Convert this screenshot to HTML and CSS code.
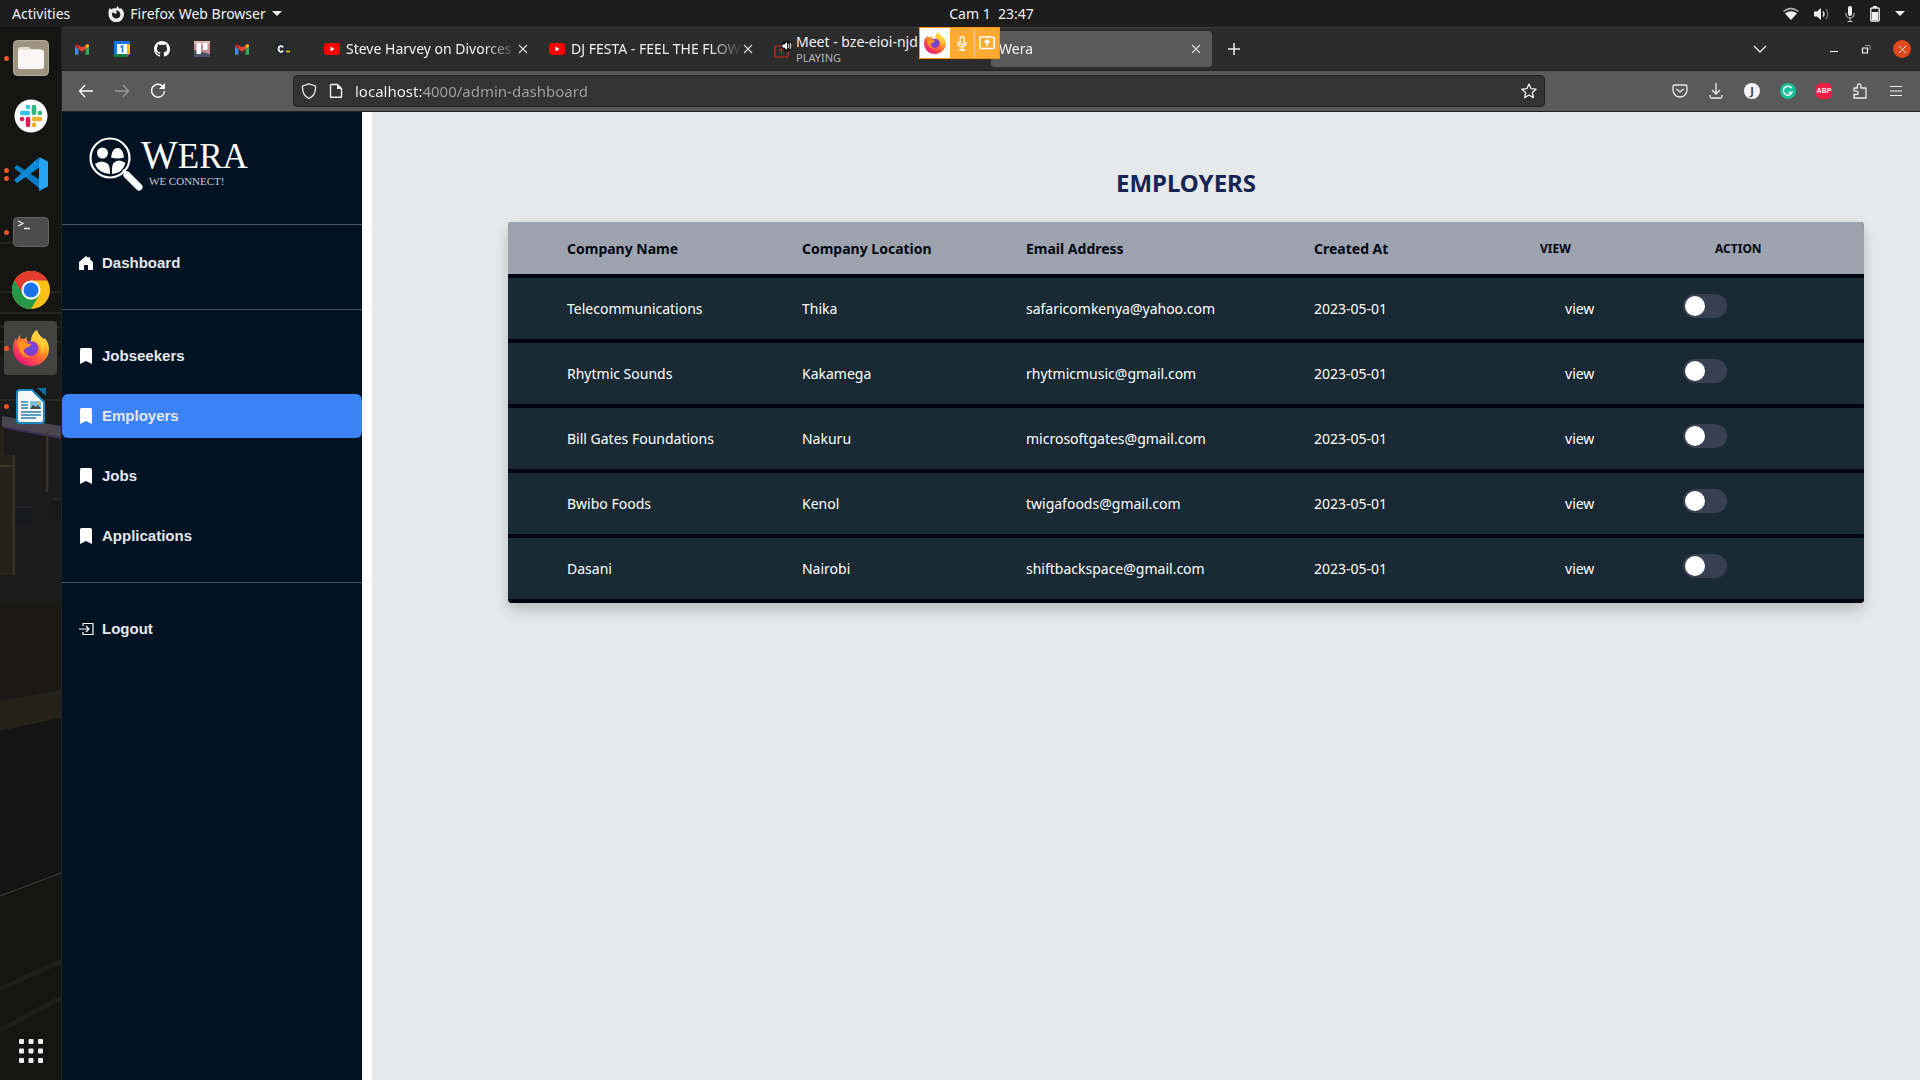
FILE: index.html
```html
<!DOCTYPE html>
<html lang="en">
<head>
<meta charset="utf-8">
<title>Wera</title>
<link rel="stylesheet" href="styles.css">
</head>
<body>
<svg width="0" height="0" class="defs" aria-hidden="true">
  <defs>
    <linearGradient id="foxBody" x1="0.85" y1="0.1" x2="0.2" y2="0.95"><stop offset="0" stop-color="#fff44f"/><stop offset=".35" stop-color="#ff9a1f"/><stop offset=".7" stop-color="#ff4a4a"/><stop offset="1" stop-color="#e01080"/></linearGradient>
    <radialGradient id="foxGlobe"><stop offset="0" stop-color="#5a55e0"/><stop offset="1" stop-color="#9535c8"/></radialGradient>
    <symbol id="firefox" viewBox="0 0 36 36">
      <path fill="url(#foxBody)" d="M18 36C8 36 0 28.500 0 18.500c0-4 1-7.500 3-10.500l.5 3L6.500 5l1 4c1.500-.5 3-.5 4 0l2-2 .5 4 4 1C18 7 20 2.500 24 0c.5 4 4 6 6.500 9l1-1c3 3 4.500 7 4.500 11C36 28.500 28 36 18 36z"/>
      <circle cx="18" cy="18.500" r="7.500" fill="url(#foxGlobe)"/>
      <path fill="#ff9420" d="M5 12c3-2 6-1 8 1l5 1c0 2-2 3-4 3.500-2 .5-2 2-3.500 2.500C11 24 14 26 18 27c-7 2-13-4-13-15z"/>
      <path fill="#ffd23a" opacity=".8" d="M24 0c.5 4 4 6 6 9 3 5 2 11-2 15 1-5 0-10-5-12-2-1-4-1-5 0C18 7 20 2.500 24 0z"/>
    </symbol>
    <symbol id="gmail" viewBox="0 0 16 12">
      <path fill="#4285f4" d="M1 12h3V5.500L0 2.500V11a1 1 0 0 0 1 1z"/><path fill="#34a853" d="M12 12h3a1 1 0 0 0 1-1V2.500l-4 3z"/>
      <path fill="#fbbc04" d="M12 0.800v4.700l4-3V1.500C16 0 14.500-.3 13.500.3z"/><path fill="#ea4335" d="M4 5.500V.8l4 3 4-3v4.700l-4 3z"/><path fill="#c5221f" d="M0 1.500v1l4 3V.8L2.500.3C1.300-.3 0 0 0 1.500z"/>
    </symbol>
    <symbol id="youtube" viewBox="0 0 16 12"><rect width="16" height="12" rx="3" fill="#f00"/><path fill="#fff" d="M6.500 3.500v5l4-2.500z"/></symbol>
    <symbol id="close" viewBox="0 0 10 10"><path d="M1 1l8 8M9 1L1 9" stroke="currentColor" stroke-width="1.100" fill="none"/></symbol>
    <symbol id="bookmark" viewBox="0 0 12 16"><path fill="#fff" d="M1.500 0h9A1.500 1.500 0 0 1 12 1.500V16l-6-3-6 3V1.500A1.500 1.500 0 0 1 1.500 0z"/></symbol>
    <symbol id="share" viewBox="0 0 16 14"><rect x=".8" y="1" width="14.400" height="11.500" rx="1.500" fill="none" stroke="currentColor" stroke-width="1.500"/><path d="M8 10V4.500M5.500 6.500L8 4l2.500 2.500" fill="none" stroke="currentColor" stroke-width="1.800"/></symbol>
  </defs>
</svg>

<header class="topbar">
  <div class="topbar-left">
    <button class="plain">Activities</button>
    <button class="plain app-menu">
      <svg width="16" height="16" viewBox="0 0 16 16"><path fill="#eee" fill-rule="evenodd" d="M1 3l1-1 1 1.500C5 2 7 2 8 2.500L9.500 0c1 1 1 2 2.500 3l1-1c2 2 3 4 3 6.500A7.500 7.500 0 0 1 .5 8.500C.5 6.500.5 5 1 3zM5 6C3 8 4 12 8 12.500s5.500-4 3.500-6.500C11 5 9 4 8 5l1 1.500L7 8z"/></svg>
      <span>Firefox Web Browser</span>
      <svg width="10" height="5" viewBox="0 0 10 5"><path fill="#eee" d="M0 0h10L5 5z"/></svg>
    </button>
  </div>
  <button class="plain clock">Cam 1&nbsp; 23:47</button>
  <div class="topbar-right">
    <svg width="16" height="14" viewBox="0 0 16 14"><path fill="#aaa" d="M0 4C5-.5 11-.5 16 4l-1 1.200C10 1.500 6 1.500 1 5.200z"/><path fill="#eee" d="M2 6.500C6 3.500 10 3.500 14 6.500L8 13z"/></svg>
    <svg width="16" height="14" viewBox="0 0 16 14"><path fill="#eee" d="M0 4.500h3L7 1v12L3 9.500H0z"/><path d="M9 4.500q2 2.500 0 5" stroke="#ddd" stroke-width="1.500" fill="none"/><path d="M12 2q3.500 5 0 10" stroke="#777" stroke-width="1.300" fill="none"/></svg>
    <svg width="10" height="16" viewBox="0 0 10 16"><rect x="3" width="4" height="10" rx="2" fill="#eee"/><path d="M1 7v1.500c0 4.500 8 4.500 8 0V7M5 12v4M2.500 15.500h5" stroke="#ccc" fill="none"/></svg>
    <svg width="10" height="16" viewBox="0 0 10 16"><path fill="#eee" d="M3 0h4v2H3z"/><rect x=".8" y="2" width="8.400" height="13" rx="1" fill="none" stroke="#eee" stroke-width="1.400"/><path fill="#eee" d="M2 6h6v8H2z"/></svg>
    <svg width="10" height="5" viewBox="0 0 10 5"><path fill="#eee" d="M0 0h10L5 5z"/></svg>
  </div>
</header>

<div class="desktop">
  <nav class="dock" aria-label="Dock">
    <svg class="wallpaper" viewBox="0 0 62 1053" preserveAspectRatio="none" aria-hidden="true">
      <rect width="62" height="1053" fill="#151614"/>
      <rect y="330" width="62" height="270" fill="#1b1b1c"/>
      <path d="M0 216h14M0 265h62M0 286h62M0 300h62M0 315h62M0 373h62" stroke="#39362a" fill="none"/>
      <path d="M2 389l60 10v12L2 400z" fill="#4a464f"/><path d="M2 400l60 11" stroke="#3b3155" stroke-width="2"/>
      <path d="M0 400h4v28h10v120H0z" fill="#25221a"/><path d="M14 428v120M0 439h12M48 405v60" stroke="#3f3828" stroke-width="2"/>
      <path d="M16 480h16v18H16zM54 474h8v22h-8z" fill="#17191c"/><path d="M15 480h17M55 472h7" stroke="#333"/>
      <path d="M0 575h62v115L0 704z" fill="#1a1916"/>
      <path d="M0 674l62-11v28L0 704z" fill="#26221a"/><path d="M0 704l62-13v156L0 869z" fill="#141414"/>
      <path d="M0 869l62-23" stroke="#454540"/><path d="M0 962l62-28M0 1003l62-32" stroke="#1e1e1b" stroke-width="5"/>
    </svg>
    <a class="dock-item" href="#" aria-label="Files"><i class="dots"><b></b></i>
      <svg width="36" height="36" viewBox="0 0 36 36"><rect x=".5" y=".5" width="35" height="35" rx="4" fill="#9c947f" stroke="#b3ac99"/><path fill="#e4dfd3" d="M5 10a3 3 0 0 1 3-3h8l2 2h10v6H5z"/><rect x="5" y="10" width="26" height="19" rx="2" fill="#f8f7f5"/></svg></a>
    <a class="dock-item" href="#" aria-label="Slack"><i class="dots"></i>
      <svg width="34" height="34" viewBox="0 0 34 34"><circle cx="17" cy="17" r="16.500" fill="#fff"/><g stroke-width="4.600" stroke-linecap="round"><path d="M8 14h6M14 8v.1" stroke="#36c5f0"/><path d="M20 8v6M26 14h-.1" stroke="#2eb67d"/><path d="M20 20h6M20 26v-.1" stroke="#ecb22e"/><path d="M14 20v6M8 20h.1" stroke="#e01e5a"/></g></svg></a>
    <a class="dock-item" href="#" aria-label="Visual Studio Code"><i class="dots"><b></b><b></b></i>
      <svg width="34" height="34" viewBox="0 0 34 34"><path fill="#0a7cc4" d="M3 8L0 11l25 20 1-8z"/><path fill="#0e8ad8" d="M0 23l3 3L26 10 24 1z"/><path fill="#25a4f2" d="M25 0l8 4a2 2 0 0 1 1 2v22a2 2 0 0 1-1 2l-8 4z"/></svg></a>
    <a class="dock-item" href="#" aria-label="Terminal"><i class="dots"><b></b></i>
      <svg width="36" height="30" viewBox="0 0 36 30"><rect x=".5" y=".5" width="35" height="29" rx="4" fill="#4c4c4c" stroke="#666"/><path d="M5 4l5 2.500L5 9M11 11.500h6" stroke="#eee" stroke-width="1.300" fill="none"/></svg></a>
    <a class="dock-item" href="#" aria-label="Chrome"><i class="dots"></i>
      <svg width="38" height="38" viewBox="0 0 38 38"><circle cx="19" cy="19" r="19" fill="#fbc116"/><path fill="#e33b2e" d="M2.500 9.500A19 19 0 0 1 35.500 9.500H19L10 24z"/><path fill="#279847" d="M2.500 9.500A19 19 0 0 0 19 38l8.500-14.500L11 23z"/><circle cx="19" cy="19" r="9.500" fill="#fff"/><circle cx="19" cy="19" r="7.500" fill="#1a73e8"/></svg></a>
    <a class="dock-item current" href="#" aria-label="Firefox"><i class="dots"><b></b></i>
      <svg width="36" height="36"><use href="#firefox"/></svg></a>
    <a class="dock-item" href="#" aria-label="Writer"><i class="dots"><b></b></i>
      <svg width="30" height="36" viewBox="0 0 30 36"><path fill="#106a9c" d="M21 0h9v8z"/><path fill="#f7f7f7" stroke="#1d8abf" stroke-width="2" d="M4 2h12l12 12v18a3 3 0 0 1-3 3H4a3 3 0 0 1-3-3V5a3 3 0 0 1 3-3z"/><path d="M5 14h7M5 17h7M5 20h7M5 24h20M5 27h20M5 30h15" stroke="#2a7fb0" stroke-width="1.500"/><path fill="#7cc0e8" d="M14 13h11v8H14z"/><path fill="#444" d="M14 21l3-4 3 2 2-2 3 4z"/><circle cx="23" cy="15" r="1.500" fill="#f5b100"/></svg></a>
    <a class="apps" href="#" aria-label="Show Applications">
      <svg width="24" height="24" viewBox="0 0 24 24" fill="#eee"><g id="r"><rect width="5" height="5" rx="1"/><rect x="9.500" width="5" height="5" rx="1"/><rect x="19" width="5" height="5" rx="1"/></g><use href="#r" y="9.500"/><use href="#r" y="19"/></svg></a>
  </nav>

  <div class="window">
    <div class="tabbar">
      <div class="pins">
        <svg width="14" height="11"><use href="#gmail"/></svg>
        <svg width="16" height="16" viewBox="0 0 16 16"><path fill="#1a73e8" d="M0 0h16v16H0z"/><path fill="#fbbc04" d="M13 3h3v10h-3z"/><path fill="#188038" d="M0 13h13v3H0z"/><path fill="#ea4335" d="M13 13h3l-3 3z"/><path fill="#2c2c2c" d="M16 13v3h-3z"/><path fill="#fff" d="M3 3h10v10H3z"/><path d="M6.500 6l2-1v6.500" stroke="#1a73e8" stroke-width="1.500" fill="none"/></svg>
        <svg width="16" height="16" viewBox="0 0 16 16"><path fill="#fff" d="M8 0C3.580 0 0 3.580 0 8c0 3.540 2.290 6.530 5.470 7.590.4.070.55-.17.55-.38 0-.19-.01-.82-.01-1.490-2.010.37-2.530-.49-2.690-.94-.09-.23-.48-.94-.82-1.130-.28-.15-.68-.52-.01-.53.63-.01 1.080.58 1.230.82.72 1.210 1.870.87 2.330.66.070-.52.28-.87.51-1.070-1.780-.2-3.640-.89-3.640-3.950 0-.87.31-1.590.82-2.150-.08-.2-.36-1.020.08-2.120 0 0 .67-.21 2.200.82.64-.18 1.320-.27 2-.27s1.360.09 2 .27c1.530-1.040 2.200-.82 2.200-.82.44 1.100.16 1.920.08 2.120.51.56.82 1.270.82 2.150 0 3.070-1.870 3.750-3.650 3.950.29.25.54.73.54 1.480 0 1.070-.01 1.930-.01 2.200 0 .21.15.46.55.38A8 8 0 0 0 16 8c0-4.420-3.580-8-8-8z"/></svg>
        <svg width="16" height="16" viewBox="0 0 16 16"><path fill="#c98c95" d="M0 0h16v16H0z"/><path fill="#4d5668" d="M0 9l16 4v3H0z"/><path fill="#e3b5b0" d="M0 0h16v3H0z"/><rect x="2.500" y="2" width="4.500" height="11" rx="1" fill="#fff"/><rect x="9" y="2" width="4.500" height="7" rx="1" fill="#fff"/></svg>
        <svg width="14" height="11"><use href="#gmail"/></svg>
        <svg width="16" height="16" viewBox="0 0 16 16"><circle cx="8" cy="8" r="8" fill="#23292f"/><path d="M9 6.500C8 4 4.500 5 4.500 8S8 12 9 9.500" stroke="#fff" stroke-width="1.800" fill="none"/><path d="M12 10.500h4" stroke="#ffd500" stroke-width="1.600"/></svg>
      </div>
      <div class="tabs">
        <div class="tab"><svg width="16" height="12"><use href="#youtube"/></svg><span class="tab-title">Steve Harvey on Divorces</span><button class="tab-close" aria-label="Close tab"><svg width="10" height="10"><use href="#close"/></svg></button></div>
        <div class="tab"><svg width="16" height="12"><use href="#youtube"/></svg><span class="tab-title">DJ FESTA - FEEL THE FLOW</span><button class="tab-close" aria-label="Close tab"><svg width="10" height="10"><use href="#close"/></svg></button></div>
        <div class="tab meet">
          <svg width="18" height="18" viewBox="0 0 18 18"><rect x="1" y="6" width="13" height="11" rx="1" fill="none" stroke="#d9261c" stroke-width="1.200"/><path d="M7.500 14V9M5 11l2.500-2.500L10 11" stroke="#d9261c" fill="none"/><circle cx="13" cy="6" r="5.500" fill="#111"/><path fill="#fff" d="M8.500 4.500h2L13 2v8l-2.500-2.500h-2z"/><path d="M14 4q2 2 0 4M16 3q2 3 0 6" stroke="#fff" fill="none"/></svg>
          <div class="meet-text"><span>Meet - bze-eioi-njd</span><small>PLAYING</small></div>
          <div class="sharing">
            <div class="sharing-logo"><svg width="22" height="22"><use href="#firefox"/></svg></div>
            <button class="sharing-btn" aria-label="Microphone in use"><svg width="10" height="15" viewBox="0 0 10 15"><rect x="3" y=".7" width="4" height="8" rx="2" fill="none" stroke="currentColor" stroke-width="1.300"/><path d="M1 6v1c0 5 8 5 8 0V6M5 11v3M2 14h6" stroke="currentColor" stroke-width="1.300" fill="none"/></svg></button>
            <button class="sharing-btn screen" aria-label="Screen shared"><svg width="16" height="14"><use href="#share"/></svg></button>
          </div>
        </div>
        <div class="tab active"><span class="tab-title">Wera</span><button class="tab-close" aria-label="Close tab"><svg width="10" height="10"><use href="#close"/></svg></button></div>
      </div>
      <button class="plain new-tab" aria-label="New tab"><svg width="14" height="14" viewBox="0 0 14 14"><path d="M7 1v12M1 7h12" stroke="#eee" stroke-width="1.500"/></svg></button>
      <div class="window-controls">
        <button class="plain list" aria-label="List tabs"><svg width="14" height="8" viewBox="0 0 14 8"><path d="M1 1l6 6 6-6" stroke="#eee" stroke-width="1.300" fill="none"/></svg></button>
        <button class="plain" aria-label="Minimize"><svg width="10" height="10" viewBox="0 0 10 10"><path d="M1 7.500h8" stroke="#fff"/></svg></button>
        <button class="plain" aria-label="Restore"><svg width="10" height="10" viewBox="0 0 10 10"><path d="M1.500 4h5v5h-5z" stroke="#fff" stroke-width="1.200" fill="none"/><path d="M4 1.500h5V6" stroke="#999" fill="none"/></svg></button>
        <button class="plain close-window" aria-label="Close"><svg width="9" height="9"><use href="#close"/></svg></button>
      </div>
    </div>

    <div class="toolbar">
      <div class="nav-buttons">
        <button class="plain" aria-label="Back"><svg width="16" height="14" viewBox="0 0 16 14"><path d="M15 7H1.500M7 1L1.500 7 7 13" stroke="#fff" stroke-width="1.300" fill="none"/></svg></button>
        <button class="plain" aria-label="Forward"><svg width="16" height="14" viewBox="0 0 16 14"><path d="M1 7h13.500M9 1l5.500 6L9 13" stroke="#999" stroke-width="1.300" fill="none"/></svg></button>
        <button class="plain" aria-label="Reload"><svg width="16" height="16" viewBox="0 0 16 16"><path d="M12.500 3A6.500 6.500 0 1 0 14.500 8" stroke="#fff" stroke-width="1.400" fill="none"/><path fill="#fff" d="M15 0v6H9z"/></svg></button>
      </div>
      <div class="urlbar">
        <svg width="16" height="16" viewBox="0 0 16 16"><path d="M8 .8L14.500 3c.3 6-1 10-6.500 12.300C2.500 13 1.200 9 1.500 3z" stroke="#eee" stroke-width="1.300" fill="none" stroke-linejoin="round"/></svg>
        <svg width="14" height="16" viewBox="0 0 14 16"><path d="M2 1.500h6.500L12.500 5.500V14.300H1.500V2z" stroke="#eee" stroke-width="1.400" fill="none" stroke-linejoin="round"/><path fill="#eee" d="M8 1v5h5z"/></svg>
        <input class="url" type="text" aria-label="Address" value="localhost:4000/admin-dashboard">
        <svg width="16" height="16" viewBox="0 0 16 16"><path d="M8 1l2.100 4.700 5 .5-3.800 3.400 1.100 5L8 12l-4.400 2.600 1.100-5L.9 6.200l5-.5z" stroke="#eee" stroke-width="1.300" fill="none" stroke-linejoin="round"/></svg>
      </div>
      <div class="extensions">
        <button class="plain" aria-label="Pocket"><svg width="16" height="14" viewBox="0 0 16 14"><path d="M2.500 1h11A1.500 1.500 0 0 1 15 2.500V6a7 7 0 0 1-14 0V2.500A1.500 1.500 0 0 1 2.500 1zM4.500 5L8 8l3.500-3" stroke="#eee" stroke-width="1.300" fill="none"/></svg></button>
        <button class="plain" aria-label="Downloads"><svg width="14" height="16" viewBox="0 0 14 16"><path d="M7 0v11M3 7l4 4 4-4M1 12v1.500A1.500 1.500 0 0 0 2.500 15h9a1.500 1.500 0 0 0 1.500-1.500V12" stroke="#eee" stroke-width="1.300" fill="none"/></svg></button>
        <button class="plain badge account">J</button>
        <button class="plain" aria-label="Grammarly"><svg width="16" height="16" viewBox="0 0 16 16"><circle cx="8" cy="8" r="8" fill="#15c39a"/><path d="M11.500 5A4.500 4.500 0 1 0 12 9.500H8.500" stroke="#fff" stroke-width="1.400" fill="none"/></svg></button>
        <button class="plain badge abp">ABP</button>
        <button class="plain" aria-label="Extensions"><svg width="16" height="16" viewBox="0 0 16 16"><path d="M2 5h3.500V2.500a1.700 1.700 0 0 1 3.400 0V5H14v10H2v-3.500h2.500a1.700 1.700 0 0 0 0-3.400H2z" stroke="#eee" stroke-width="1.300" fill="none" stroke-linejoin="round"/></svg></button>
        <button class="plain" aria-label="Menu"><svg width="12" height="12" viewBox="0 0 12 12"><path d="M0 1.500h12M0 6h12M0 10.500h12" stroke="#eee" stroke-width="1.200"/></svg></button>
      </div>
    </div>

    <div class="page">
      <aside class="sidebar">
        <a class="brand" href="#">
          <svg width="54" height="54" viewBox="0 0 54 54"><circle cx="21" cy="21" r="19.500" fill="none" stroke="#fff" stroke-width="2.200"/><path d="M38 38l12 12" stroke="#fff" stroke-width="7" stroke-linecap="round"/><path d="M34 33l5 5" stroke="#fff" stroke-width="3"/><g fill="#fff"><circle cx="13.500" cy="16" r="5.500"/><path d="M6 27q7-5 13 0 2 2 2 10Q9 36 6 27zM36.500 26q-7-5-12 0-2 3-1.500 11 11-1 13.500-11zM22 20.500q1-9.500 6.500-9.500T35 20.500q-6 2-13 0z"/></g></svg>
          <span class="brand-text"><span class="brand-name"><span class="brand-cap">W</span>ERA</span><span class="brand-tag">WE CONNECT!</span></span>
        </a>
        <nav class="menu">
          <div class="menu-group first"><a class="menu-item" href="#"><svg width="16" height="16" viewBox="0 0 16 16"><path fill="#fff" d="M8 1l2.500 2V2H12v2.200L15 7v8h-5v-5H6v5H1V7z"/></svg>Dashboard</a></div>
          <div class="menu-group">
            <a class="menu-item" href="#"><svg width="16" height="16"><use href="#bookmark"/></svg>Jobseekers</a>
            <a class="menu-item selected" href="#" aria-current="page"><svg width="16" height="16"><use href="#bookmark"/></svg>Employers</a>
            <a class="menu-item" href="#"><svg width="16" height="16"><use href="#bookmark"/></svg>Jobs</a>
            <a class="menu-item" href="#"><svg width="16" height="16"><use href="#bookmark"/></svg>Applications</a>
          </div>
          <div class="menu-group"><a class="menu-item" href="#"><svg width="16" height="16" viewBox="0 0 16 16"><path d="M5 5V2.500h10v11H5V11M1 8h9M8 5l3 3-3 3" stroke="#fff" stroke-width="1.200" fill="none" stroke-linejoin="round"/></svg>Logout</a></div>
        </nav>
      </aside>
      <main class="content">
        <h1>EMPLOYERS</h1>
        <table class="employers">
          <colgroup><col class="c-name"><col class="c-location"><col class="c-email"><col class="c-date"><col class="c-view"><col class="c-action"></colgroup>
          <thead><tr><th>Company Name</th><th>Company Location</th><th>Email Address</th><th>Created At</th><th class="minor">VIEW</th><th class="minor action">ACTION</th></tr></thead>
          <tbody>
            <tr><td>Telecommunications</td><td>Thika</td><td>safaricomkenya@yahoo.com</td><td>2023-05-01</td><td class="view"><a href="#">view</a></td><td class="switch"><input class="toggle" type="checkbox" aria-label="Telecommunications"></td></tr>
            <tr><td>Rhytmic Sounds</td><td>Kakamega</td><td>rhytmicmusic@gmail.com</td><td>2023-05-01</td><td class="view"><a href="#">view</a></td><td class="switch"><input class="toggle" type="checkbox" aria-label="Rhytmic Sounds"></td></tr>
            <tr><td>Bill Gates Foundations</td><td>Nakuru</td><td>microsoftgates@gmail.com</td><td>2023-05-01</td><td class="view"><a href="#">view</a></td><td class="switch"><input class="toggle" type="checkbox" aria-label="Bill Gates Foundations"></td></tr>
            <tr><td>Bwibo Foods</td><td>Kenol</td><td>twigafoods@gmail.com</td><td>2023-05-01</td><td class="view"><a href="#">view</a></td><td class="switch"><input class="toggle" type="checkbox" aria-label="Bwibo Foods"></td></tr>
            <tr><td>Dasani</td><td>Nairobi</td><td>shiftbackspace@gmail.com</td><td>2023-05-01</td><td class="view"><a href="#">view</a></td><td class="switch"><input class="toggle" type="checkbox" aria-label="Dasani"></td></tr>
          </tbody>
        </table>
      </main>
    </div>
  </div>
</div>
</body>
</html>
```

FILE: styles.css
```css
* { box-sizing: border-box; }
body {
  margin: 0;
  min-height: 100vh;
  display: flex;
  flex-direction: column;
  font-family: "Noto Sans", "Open Sans", sans-serif;
  font-size: 14px;
  line-height: 20px;
  color: #f2f2f2;
  background: #1d1d1d;
}
svg { display: block; flex: none; }
a { color: inherit; text-decoration: none; }
.defs { position: absolute; }
.plain, .tab-close, .sharing-btn {
  border: 0;
  padding: 0;
  background: none;
  font: inherit;
  color: inherit;
  display: flex;
  align-items: center;
  justify-content: center;
}

/* Desktop top bar */
.topbar {
  height: 27px;
  padding: 0 15px 0 12px;
  display: grid;
  grid-template-columns: 1fr auto 1fr;
  align-items: center;
}
.topbar-left { display: flex; gap: 38px; }
.app-menu { gap: 6px; }
.clock { padding-left: 66px; }
.topbar-right { display: flex; align-items: center; justify-content: flex-end; gap: 15px; }

/* Dock */
.desktop { flex: 1; display: flex; }
.dock {
  position: relative;
  width: 62px;
  flex: none;
  display: flex;
  flex-direction: column;
  gap: 4px;
  padding: 4px 4px 17px;
  border-right: 1px solid #222;
}
.wallpaper { position: absolute; inset: 0; width: 100%; height: 100%; }
.dock-item {
  position: relative;
  height: 54px;
  border-radius: 4px;
  display: flex;
  align-items: center;
  justify-content: center;
}
.dock-item.current { background: #434341; }
.dots {
  position: absolute;
  left: 0;
  display: flex;
  flex-direction: column;
  gap: 3px;
}
.dots b { width: 5px; height: 5px; border-radius: 50%; background: #e95420; }
.apps { position: relative; margin-top: auto; display: flex; justify-content: center; }

/* Browser chrome */
.window { flex: 1; min-width: 0; display: flex; flex-direction: column; }
.tabbar {
  height: 44px;
  display: flex;
  align-items: center;
  background: #2c2c2c;
  border-top: 1px solid #3d3d3d;
  border-bottom: 1px solid #1c1c1c;
}
.pins { display: grid; grid-template-columns: repeat(6, 40px); justify-items: center; align-items: center; margin-right: 12px; }
.tabs { display: flex; align-self: stretch; }
.tab {
  position: relative;
  width: 225px;
  display: flex;
  align-items: center;
  gap: 6px;
  padding: 0 10px;
}
.tab-title {
  flex: 1;
  min-width: 0;
  overflow: hidden;
  white-space: nowrap;
  mask-image: linear-gradient(to left, transparent, #000 32px);
}
.tab-close { width: 12px; height: 16px; margin-left: -6px; color: #ddd; }
.tab.meet { gap: 4px; }
.meet-text { display: flex; flex-direction: column; white-space: nowrap; line-height: 18px; }
.meet-text small { font-size: 11px; line-height: 14px; color: #b5b5b5; }
.tab.active {
  width: 221px;
  height: 36px;
  margin: 3px 2px 0;
  padding: 0 10px 0 8px;
  border-radius: 4px;
  background: #5a5a5a;
}
.sharing {
  position: absolute;
  z-index: 1;
  left: 155px;
  top: -1px;
  height: 32px;
  width: 81px;
  display: flex;
  border: 1px solid #ff9500;
  background: #ffaa33;
}
.sharing-logo { width: 30px; display: flex; align-items: center; justify-content: center; background: #fff; }
.sharing-btn { flex: 1; color: #fff; }
.sharing-btn.screen { border-left: 1px solid #ffd08a; }
.new-tab { width: 40px; height: 36px; }
.window-controls { margin-left: auto; display: flex; align-items: center; gap: 22px; padding-right: 9px; }
.list { margin-right: 40px; }
.close-window { width: 18px; height: 18px; border-radius: 50%; background: #e2491a; }
.toolbar {
  height: 41px;
  display: flex;
  align-items: center;
  background: #5a5a5a;
  border-bottom: 1px solid #222;
}
.nav-buttons { width: 231px; display: flex; gap: 20px; padding-left: 16px; }
.urlbar {
  flex: 1;
  height: 32px;
  display: flex;
  align-items: center;
  gap: 12px;
  padding: 0 7px;
  border: 1px solid #222;
  border-radius: 4px;
  background: #333;
}
.url {
  flex: 1;
  min-width: 0;
  border: 0;
  padding: 0;
  font: 15px/20px "Noto Sans", "Open Sans", sans-serif;
  color: transparent;
  background: linear-gradient(to right, #f8f8f8 67px, #a3a3a3 67px);
  background-clip: text;
}
.extensions { width: 375px; display: grid; grid-template-columns: repeat(7, 36px); justify-items: center; justify-content: end; align-items: center; padding-right: 6px; }
.badge { width: 16px; height: 16px; border-radius: 50%; font-weight: 700; }
.account { background: #f5f5f5; color: #444; font-size: 11px; }
.abp { background: #ed1e45; font: 700 7px/16px "Liberation Sans", sans-serif; border-radius: 5px; }

/* Application */
.page { flex: 1; display: flex; gap: 10px; background: #fff; }
.sidebar { width: 300px; flex: none; background: #011222; }
.brand { height: 112px; display: flex; padding: 25px 27px 0; }
.brand-text { display: flex; flex-direction: column; font-family: "Liberation Serif", serif; color: #fff; margin-left: -2px; }
.brand-name { font-size: 35px; line-height: 36px; }
.brand-cap { font-size: 39px; }
.brand-tag { font-size: 11px; line-height: 12px; padding-left: 8px; color: #c8ccd2; }
.menu-group {
  display: flex;
  flex-direction: column;
  gap: 16px;
  padding: 24px 0;
  border-top: 1px solid #4b5563;
}
.menu-group.first { padding-top: 16px; }
.menu-item {
  height: 44px;
  display: flex;
  align-items: center;
  gap: 8px;
  padding: 0 16px;
  border-radius: 6px;
  font: 700 15px/24px "Liberation Sans", sans-serif;
  color: #e5e7eb;
}
.menu-item.selected { background: #3b82f6; }
.content { flex: 1; min-width: 0; padding: 55px 56px 48px 136px; background: #e6e8e9; }
h1 { margin: 0 0 23px; font-size: 24px; line-height: 32px; font-weight: 700; text-align: center; color: #172554; }
.employers {
  width: 100%;
  table-layout: fixed;
  border-collapse: separate;
  border-spacing: 0;
  border-radius: 4px;
  overflow: hidden;
  box-shadow: 0 10px 15px rgba(0, 0, 0, .1), 0 4px 12px rgba(0, 0, 0, .1);
  background: #192a35;
}
.c-name { width: 17.33%; }
.c-location { width: 16.52%; }
.c-email { width: 21.24%; }
.c-date { width: 16.67%; }
.c-view { width: 10.62%; }
.c-action { width: 17.62%; }
th, td { padding: 0 0 0 59px; text-align: left; white-space: nowrap; border-bottom: 4px solid #020613; }
th { height: 56px; padding-top: 2px; font-weight: 700; color: #030712; background: #9ca3af; }
th.minor { font-size: 12px; }
th.action { padding-left: 90px; }
td { height: 65px; color: #fff; }
td.view { padding-left: 84px; }
td.switch { padding-left: 58px; padding-bottom: 5px; }
.toggle {
  appearance: none;
  display: block;
  width: 44px;
  height: 24px;
  margin: 0;
  padding: 2px;
  border-radius: 12px;
  background: #374151;
}
.toggle::before { content: ""; display: block; width: 20px; height: 20px; border-radius: 50%; background: #fff; }
.toggle:checked { background: #3b82f6; }
.toggle:checked::before { margin-left: auto; }
```
